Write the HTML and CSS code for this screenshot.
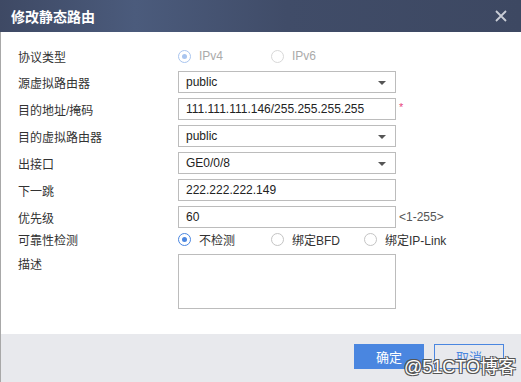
FILE: index.html
```html
<!DOCTYPE html>
<html lang="zh-CN">
<head>
    <meta charset="UTF-8">
    <title>修改静态路由</title>
    <link rel="stylesheet" href="styles.css">
</head>
<body>
    <div class="dialog">
        <div class="titlebar">
            <span class="title">修改静态路由</span>
            <svg class="close" width="12" height="12" viewBox="0 0 12 12">
                <path d="M1 1L11 11M11 1L1 11" stroke="#c9cdd6" stroke-width="1.8" fill="none"/>
            </svg>
        </div>

        <div class="content">
            <div class="row row-radio">
                <label class="label">协议类型</label>
                <div class="options">
                    <span class="option disabled"><span class="radio checked"></span>IPv4</span>
                    <span class="option disabled"><span class="radio"></span>IPv6</span>
                </div>
            </div>
            <div class="row">
                <label class="label">源虚拟路由器</label>
                <div class="field select">public<span class="arrow"></span></div>
            </div>
            <div class="row">
                <label class="label">目的地址/掩码</label>
                <div class="field">111.111.111.146/255.255.255.255</div>
                <span class="required">*</span>
            </div>
            <div class="row">
                <label class="label">目的虚拟路由器</label>
                <div class="field select">public<span class="arrow"></span></div>
            </div>
            <div class="row">
                <label class="label">出接口</label>
                <div class="field select">GE0/0/8<span class="arrow"></span></div>
            </div>
            <div class="row">
                <label class="label">下一跳</label>
                <div class="field">222.222.222.149</div>
            </div>
            <div class="row row-priority">
                <label class="label">优先级</label>
                <div class="field">60</div>
                <span class="hint">&lt;1-255&gt;</span>
            </div>
            <div class="row row-check">
                <label class="label">可靠性检测</label>
                <div class="options">
                    <span class="option"><span class="radio checked"></span>不检测</span>
                    <span class="option"><span class="radio"></span>绑定BFD</span>
                    <span class="option"><span class="radio"></span>绑定IP-Link</span>
                </div>
            </div>
            <div class="row row-desc">
                <label class="label">描述</label>
                <div class="field textarea"></div>
            </div>
        </div>

        <div class="footer">
            <button class="btn btn-primary">确定</button>
            <button class="btn btn-default">取消</button>
            <span class="watermark">@51CTO博客</span>
        </div>
    </div>
</body>
</html>
```

FILE: styles.css
```css
body {
    margin: 0;
    font-family: "Liberation Sans", Arial, "Noto Sans CJK SC", sans-serif;
    font-size: 12px;
    color: #333;
    background: #fff;
}

.dialog {
    width: 521px;
    height: 382px;
    display: flex;
    flex-direction: column;
    overflow: hidden;
}

.titlebar {
    height: 32px;
    flex-shrink: 0;
    display: flex;
    align-items: center;
    justify-content: space-between;
    padding: 0 14px 0 11px;
    background: linear-gradient(90deg, #3e4964 0%, #4b5b7c 26%, #404c68 55%, #3d4862 100%);
}

.title {
    color: #fff;
    font-size: 14px;
    font-weight: bold;
}

.content {
    flex: 1;
    border-left: 1px solid #a8a8a8;
    padding: 14px 0 0 17px;
}

.row {
    display: flex;
    align-items: center;
    height: 22px;
    margin-bottom: 5px;
}

.label {
    width: 160px;
    flex-shrink: 0;
}

.row-radio {
    height: 20px;
    margin-bottom: 5px;
}

.row-priority {
    margin-top: 1px;
    margin-bottom: 0;
}

.row-check {
    margin-bottom: 4px;
}

.row-desc {
    height: auto;
    align-items: flex-start;
}

.row-desc .label {
    padding-top: 1px;
}

.field {
    position: relative;
    width: 218px;
    height: 22px;
    box-sizing: border-box;
    border: 1px solid #bcbcbc;
    padding: 0 7px;
    line-height: 20px;
    color: #222;
}

.textarea {
    height: 55px;
}

.arrow {
    position: absolute;
    right: 9px;
    top: 9px;
    width: 0;
    height: 0;
    border-left: 4px solid transparent;
    border-right: 4px solid transparent;
    border-top: 4px solid #555;
}

.required {
    color: #e8457c;
    margin-left: 3px;
    font-size: 11px;
    align-self: flex-start;
    margin-top: 3px;
}

.hint {
    color: #555;
    margin-left: 3px;
}

.options {
    display: flex;
}

.option {
    width: 93px;
    display: flex;
    align-items: center;
    gap: 8px;
}

.option.disabled {
    color: #aaa;
}

.radio {
    width: 13px;
    height: 13px;
    box-sizing: border-box;
    border: 1px solid #c4c4c4;
    border-radius: 50%;
    position: relative;
    flex-shrink: 0;
}

.radio.checked {
    border-color: #4a86e0;
}

.radio.checked::after {
    content: "";
    position: absolute;
    left: 3px;
    top: 3px;
    width: 5px;
    height: 5px;
    border-radius: 50%;
    background: #4a86e0;
}

.disabled .radio {
    border-color: #d8d8d8;
}

.disabled .radio.checked {
    border-color: #a9c5ef;
}

.disabled .radio.checked::after {
    background: #a9c5ef;
}

.footer {
    position: relative;
    height: 48px;
    flex-shrink: 0;
    box-sizing: border-box;
    border-left: 1px solid #a8a8a8;
    background: #e8e9ed;
    display: flex;
    justify-content: flex-end;
    align-items: flex-start;
    gap: 10px;
    padding: 10px 17px 0 0;
}

.btn {
    width: 70px;
    height: 25px;
    font-family: inherit;
    font-size: 13px;
    border: 1px solid #4a86e0;
    cursor: pointer;
}

.btn-primary {
    background: #4a86e0;
    color: #fff;
}

.btn-default {
    background: #e8e9ed;
    color: #4a86e0;
}

.watermark {
    position: absolute;
    left: 403px;
    top: 18px;
    font-size: 18px;
    color: #fff;
    text-shadow: 1px 1px 0 #555, -1px -1px 0 #555, 1px -1px 0 #555, -1px 1px 0 #555;
}
```
